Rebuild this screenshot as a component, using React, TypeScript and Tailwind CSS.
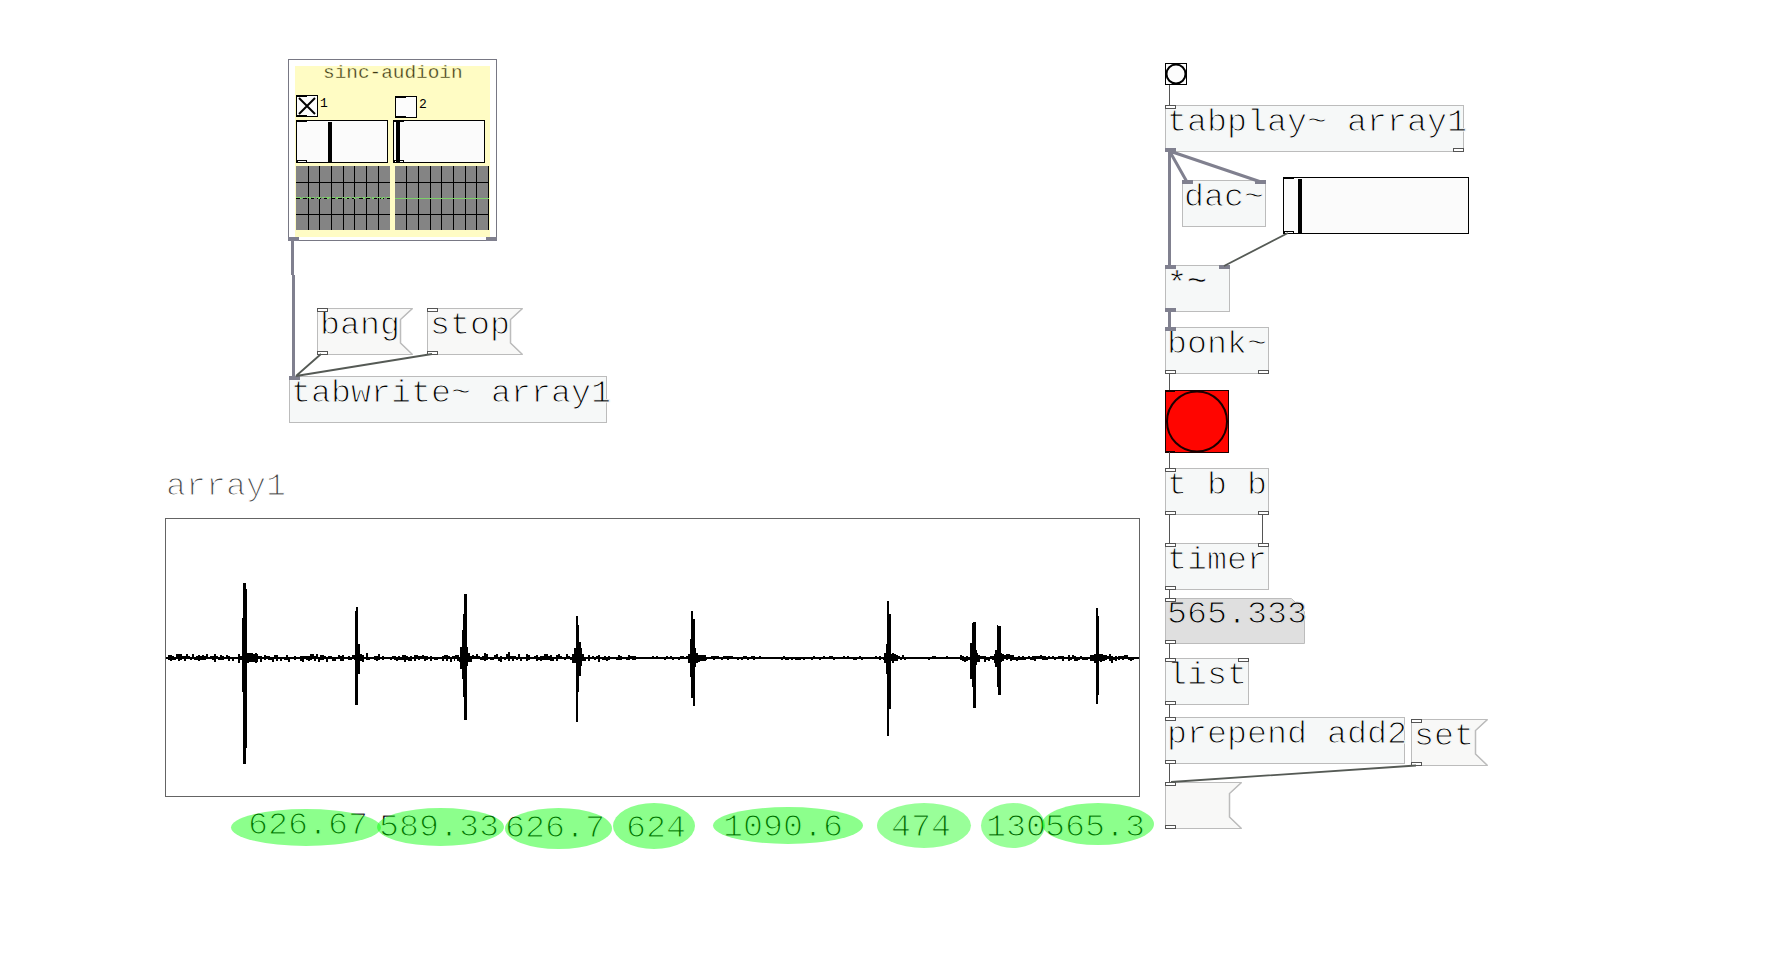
import type { ReactNode } from "react";

type Kind = "control" | "signal";

function Port({ className, kind = "control" }: { className: string; kind?: Kind }) {
  const look = kind === "signal" ? "bg-[#80808f]" : "border border-[#555] bg-white";
  return <span className={`absolute h-1 w-[11px] ${look} ${className}`} />;
}

function Label({ children, className = "" }: { children: ReactNode; className?: string }) {
  return (
    <span
      className={`block origin-top-left scale-y-[.93] text-[33.33px] leading-[32px] whitespace-pre ${className}`}
    >
      {children}
    </span>
  );
}

function ObjectBox({ className, text, children }: { className: string; text: ReactNode; children?: ReactNode }) {
  return (
    <div className={`absolute h-[47px] border border-[#bcbcbc] bg-[#f6f8f8] pt-[2px] pl-px ${className}`}>
      <Label className="[-webkit-text-stroke:1.15px_#f6f8f8]">{text}</Label>
      {children}
    </div>
  );
}

function MessageBox({ className, width, text }: { className: string; width: number; text: string }) {
  const r = width - 0.5;
  const inner = r - 12;
  return (
    <div className={`absolute h-[47px] pt-[3px] pl-[3px] ${className}`}>
      <svg className="absolute top-0 left-0" width={width} height="47" fill="#f8f8f7" stroke="#bcbcbc">
        <path d={`M.5 .5H${r}L${inner} 11.5V35L${r} 46.5H.5Z`} />
        <path d={`M${r} .5L${inner} 11.5V35L${r} 46.5`} fill="none" strokeWidth="1.5" />
      </svg>
      <Label className="relative [-webkit-text-stroke:1.15px_#f8f8f7]">{text}</Label>
      <Port className="top-0 left-0" />
      <Port className="bottom-0 left-0" />
    </div>
  );
}

function Toggle({ on }: { on?: boolean }) {
  return (
    <div className="flex size-[22px] flex-col justify-between border border-black bg-[#fcfcfc]">
      <span className="h-px w-[10px] bg-black" />
      {on && (
        <svg className="-my-px" width="20" height="20" stroke="#000" strokeWidth="2">
          <path d="M2 2L18 18M18 2L2 18" />
        </svg>
      )}
      <span className="h-px w-[10px] bg-black" />
    </div>
  );
}

function Slider({ className, thumb }: { className: string; thumb: string }) {
  return (
    <div className={`border border-black bg-[#fbfbfb] ${className}`}>
      <div className="relative flex h-full flex-col justify-between">
        <span className="h-px w-[10px] bg-black" />
        <span className="h-[2px] w-[10px] border border-b-0 border-black" />
        <span className={`absolute top-px bottom-0 w-1 bg-black ${thumb}`} />
      </div>
    </div>
  );
}

function Scope({ className, lines, noisy }: { className?: string; lines: number[]; noisy?: boolean }) {
  return (
    <svg className={className} width="94" height="64" shapeRendering="crispEdges">
      <rect width="94" height="64" fill="#848484" />
      {lines.map((x) => (
        <rect key={x} x={x} y="0" width="1" height="64" fill="#000" />
      ))}
      <rect y="16" width="94" height="1" fill="#000" />
      <rect y="48" width="94" height="1" fill="#000" />
      {noisy && <path d="M0 32.5H94" stroke="#000" strokeDasharray="4 3" />}
      <path
        d={noisy ? "M0 31.5H94" : "M0 32.5H94"}
        stroke="#7cd068"
        strokeDasharray={noisy ? "5 1 3 1" : undefined}
      />
      {noisy && <path d="M4 32.5H94" stroke="#7cd068" strokeDasharray="2 7" />}
    </svg>
  );
}

function Subpatch() {
  return (
    <section className="absolute top-[59px] left-[288px] h-[182px] w-[209px] border border-[#787884] bg-white p-[6px]">
      <div className="flex h-[171px] w-[195px] flex-col bg-[#fffcc4]">
        <h2 className="h-[29px] origin-top scale-y-[.93] pl-[28px] text-[19.4px] leading-[16px] font-normal text-[#3c3814] [-webkit-text-stroke:.35px_#fffcc4]">
          sinc-audioin
        </h2>
        <div className="flex gap-[5px] pl-px">
          <div className="flex flex-col">
            <div className="flex h-[25px] gap-[2px] text-[13px] leading-[18px]">
              <Toggle on />1
            </div>
            <Slider className="h-[43px] w-[92px]" thumb="left-[31px]" />
            <Scope className="mt-[3px] -mr-[2px]" lines={[12, 23, 35, 47, 58, 70, 82]} noisy />
          </div>
          <div className="flex flex-col">
            <div className="flex h-[25px] gap-[2px] pt-px pl-[2px] text-[13px] leading-[18px]">
              <Toggle />2
            </div>
            <Slider className="h-[43px] w-[92px]" thumb="left-[2px]" />
            <Scope className="mt-[3px] ml-[2px]" lines={[11, 23, 35, 46, 58, 70, 81, 93]} />
          </div>
        </div>
      </div>
      <Port kind="signal" className="-bottom-px -left-px" />
      <Port kind="signal" className="-right-px -bottom-px" />
    </section>
  );
}

// Onset peaks as [x, top, width, bottom].
const peaks = [
  [242, 618, 1, 692], [243, 583, 3, 764], [246, 589, 1, 748],
  [355, 611, 1, 705], [356, 607, 2, 705], [358, 644, 2, 674],
  [460, 647, 2, 669], [462, 630, 1, 679], [463, 614, 1, 697], [464, 594, 3, 720], [467, 647, 1, 666],
  [574, 648, 2, 663], [576, 616, 2, 722], [578, 625, 1, 692], [579, 642, 2, 676], [581, 648, 1, 666],
  [690, 639, 1, 677], [691, 611, 2, 698], [693, 619, 2, 706], [695, 648, 1, 667],
  [885, 654, 1, 662], [886, 644, 1, 674], [887, 601, 2, 736], [889, 614, 2, 709],
  [970, 643, 2, 679], [972, 623, 1, 687], [973, 622, 3, 708], [976, 650, 1, 665],
  [995, 650, 2, 667], [997, 625, 1, 687], [998, 626, 3, 695],
  [1096, 608, 2, 704], [1098, 616, 1, 695],
];

// Noise floor as [end x, amplitude at start, amplitude at end].
const floor = [
  [242, 3, 3], [247, 4, 6], [258, 6, 4], [274, 3.5, 2.5], [355, 2.4, 2.6], [360, 5, 5], [370, 4, 3],
  [455, 2.4, 2.6], [460, 3, 3], [470, 5, 5], [520, 3.55, 3.5], [572, 2.8, 2.8], [584, 5, 4], [602, 3.5, 2.8],
  [640, 1.8, 1.4], [688, 0.6, 0.8], [698, 5, 5], [707, 4.5, 2.5], [765, 1.1, 1.1], [884, 0.8, 0.9],
  [892, 5, 5], [900, 4.5, 2.5], [906, 2.5, 1.5], [958, 0.6, 0.6], [970, 2, 3], [980, 6, 4], [994, 3, 2.5],
  [1004, 5, 4], [1020, 3.2, 2], [1082, 1.3, 1.6], [1094, 2.6, 3.5], [1103, 5, 4], [1118, 3.7, 3],
  [1134, 2.6, 1.8], [1139, 0.4, 0.4],
];

function noisePath() {
  let seed = 7;
  const rnd = () => {
    seed = (seed * 16807) % 2147483647;
    return seed / 2147483647;
  };
  let d = "";
  let start = 166;
  for (const [end, a, b] of floor) {
    for (let x = start; x < end; x += 2) {
      const amp = a + ((b - a) * (x - start)) / (end - start);
      const up = amp > 3.6 ? amp * (0.45 + rnd() * 0.4) : amp * rnd() * rnd() * 1.4;
      const down = amp > 3.6 ? amp * (0.4 + rnd() * 0.4) : amp * rnd() * rnd() * 1.4;
      const top = 657 - Math.round(up);
      const bottom = 659 + Math.round(down);
      d += `M${x} ${top}h${Math.min(2, end - x)}V${bottom}H${x}Z`;
    }
    start = end;
  }
  return d;
}

function Waveform() {
  return (
    <svg className="absolute top-0 left-0" width="1779" height="964" shapeRendering="crispEdges">
      <rect x="165.5" y="518.5" width="974" height="278" fill="none" stroke="#646464" />
      <path d={noisePath()} />
      {peaks.map(([x, top, w, bottom]) => (
        <rect key={x} x={x} y={top} width={w} height={bottom - top} />
      ))}
    </svg>
  );
}

function Cords() {
  return (
    <svg className="absolute top-0 left-0" width="1779" height="964" fill="none">
      <g stroke="#80808f" strokeWidth="3" shapeRendering="crispEdges">
        <path d="M292.5 240V275M293 275V310M293.5 310V378" />
        <path d="M1169.5 151V266M1169.5 310V329" />
      </g>
      <path d="M1169.5 151L1187 182M1169.5 151L1261 182" stroke="#80808f" strokeWidth="3" />
      <path
        d="M321 354L296 376M432 354L296 376M1288 233L1224 266M1416 765.5L1171 782"
        stroke="#555a55"
        strokeWidth="1.8"
      />
      <path
        d="M1169.5 85V105M1169.5 374V390M1169.5 452V468M1169.5 515V543M1262.5 515V543M1169.5 590V598M1169.5 644V658M1169.5 705V717M1169.5 763V782"
        stroke="#555"
      />
    </svg>
  );
}

function Interval({ text, textClass, ellipseClass }: { text: string; textClass: string; ellipseClass: string }) {
  return (
    <>
      <Label className={`absolute [-webkit-text-stroke:1.2px_#fff] ${textClass}`}>{text}</Label>
      <span className={`absolute rounded-[50%] ${ellipseClass}`} />
    </>
  );
}

export default function App() {
  return (
    <main className="relative h-[964px] w-[1779px] overflow-hidden bg-white font-['Liberation_Mono',monospace] text-black">
      <Subpatch />

      <MessageBox className="top-[308px] left-[317px]" width={96} text="bang" />
      <MessageBox className="top-[308px] left-[427px]" width={96} text="stop" />
      <ObjectBox className="top-[376px] left-[289px] w-[318px]" text="tabwrite~ array1">
        <Port kind="signal" className="-top-px -left-px" />
      </ObjectBox>

      <Label className="absolute top-[472px] left-[166px] text-[#4a4a4a] [-webkit-text-stroke:1.3px_#fff]">
        array1
      </Label>
      <Waveform />

      <svg className="absolute top-[63px] left-[1165px]" width="22" height="22" fill="#fcfcfc" stroke="#000">
        <rect x=".5" y=".5" width="21" height="21" />
        <circle cx="11" cy="11" r="9.5" strokeWidth="2" />
      </svg>
      <ObjectBox className="top-[105px] left-[1165px] w-[299px]" text="tabplay~ array1">
        <Port className="-top-px -left-px" />
        <Port kind="signal" className="-bottom-px -left-px" />
        <Port className="-right-px -bottom-px" />
      </ObjectBox>
      <ObjectBox className="top-[180px] left-[1182px] w-[84px]" text="dac~">
        <Port kind="signal" className="-top-px -left-px" />
        <Port kind="signal" className="-top-px -right-px" />
      </ObjectBox>
      <Slider className="absolute top-[177px] left-[1283px] h-[57px] w-[186px]" thumb="left-[14px]" />
      <ObjectBox
        className="top-[265px] left-[1165px] w-[65px]"
        text={
          <span className="[-webkit-text-stroke:.6px_#f6f8f8]">
            <span className="relative top-[2px] inline-block leading-[32px]">*</span>~
          </span>
        }
      >
        <Port kind="signal" className="-top-px -left-px" />
        <Port kind="signal" className="-top-px -right-px" />
        <Port kind="signal" className="-bottom-px -left-px" />
      </ObjectBox>
      <ObjectBox className="top-[327px] left-[1165px] w-[104px]" text="bonk~">
        <Port kind="signal" className="-top-px -left-px" />
        <Port className="-bottom-px -left-px" />
        <Port className="-right-px -bottom-px" />
      </ObjectBox>
      <svg className="absolute top-[390px] left-[1165px]" width="64" height="63" fill="#ff0500" stroke="#1a0000">
        <rect x=".5" y=".5" width="63" height="62" />
        <circle cx="32" cy="31.5" r="30" strokeWidth="2" />
        <path d="M0 1.5H10M0 61.5H10" />
      </svg>
      <ObjectBox className="top-[468px] left-[1165px] w-[104px]" text="t b b">
        <Port className="-top-px -left-px" />
        <Port className="-bottom-px -left-px" />
        <Port className="-right-px -bottom-px" />
      </ObjectBox>
      <ObjectBox className="top-[543px] left-[1165px] w-[104px]" text="timer">
        <Port className="-top-px -left-px" />
        <Port className="-top-px -right-px" />
        <Port className="-bottom-px -left-px" />
      </ObjectBox>
      <div className="absolute top-[598px] left-[1165px] h-[46px] w-[140px] pt-[2px] pl-[2px]">
        <svg className="absolute top-0 left-0" width="140" height="46" fill="#dfdfdf" stroke="#bcbcbc">
          <path d="M.5 .5H126.500L139.500 13.500V45.500H.5Z" />
        </svg>
        <Label className="relative [-webkit-text-stroke:1.15px_#dfdfdf]">565.333</Label>
        <Port className="top-0 left-0" />
        <Port className="bottom-0 left-0" />
      </div>
      <ObjectBox className="top-[658px] left-[1165px] w-[84px]" text="list">
        <Port className="-top-px -left-px" />
        <Port className="-top-px -right-px" />
        <Port className="-bottom-px -left-px" />
      </ObjectBox>
      <ObjectBox className="top-[717px] left-[1165px] w-[240px]" text="prepend add2">
        <Port className="-top-px -left-px" />
        <Port className="-bottom-px -left-px" />
      </ObjectBox>
      <MessageBox className="top-[719px] left-[1411px]" width={77} text="set" />
      <MessageBox className="top-[782px] left-[1165px]" width={77} text="" />

      <Cords />

      <Interval text="626.67" textClass="top-[811px] left-[248px]" ellipseClass="top-[809px] left-[231px] h-[37px] w-[150px] bg-[#00ff00]/45" />
      <Interval text="589.33" textClass="top-[813px] left-[379px]" ellipseClass="top-[808px] left-[377px] h-[38px] w-[127px] bg-[#00ff00]/45" />
      <Interval text="626.7" textClass="top-[814px] left-[505px]" ellipseClass="top-[808px] left-[505px] h-[41px] w-[107px] bg-[#00ff00]/45" />
      <Interval text="624" textClass="top-[814px] left-[626px]" ellipseClass="top-[803px] left-[613px] h-[46px] w-[82px] bg-[#00ff00]/45" />
      <Interval text="1090.6" textClass="top-[813px] left-[723px]" ellipseClass="top-[807px] left-[713px] h-[37px] w-[150px] bg-[#00ff00]/45" />
      <Interval text="474" textClass="top-[813px] left-[891px]" ellipseClass="top-[803px] left-[877px] h-[45px] w-[94px] bg-[#00ff00]/40" />
      <Interval text="130" textClass="top-[813px] left-[986px]" ellipseClass="top-[803px] left-[981px] h-[45px] w-[64px] bg-[#00ff00]/40" />
      <Interval text="565.3" textClass="top-[813px] left-[1045px]" ellipseClass="top-[803px] left-[1042px] h-[42px] w-[112px] bg-[#00ff00]/45" />
    </main>
  );
}
